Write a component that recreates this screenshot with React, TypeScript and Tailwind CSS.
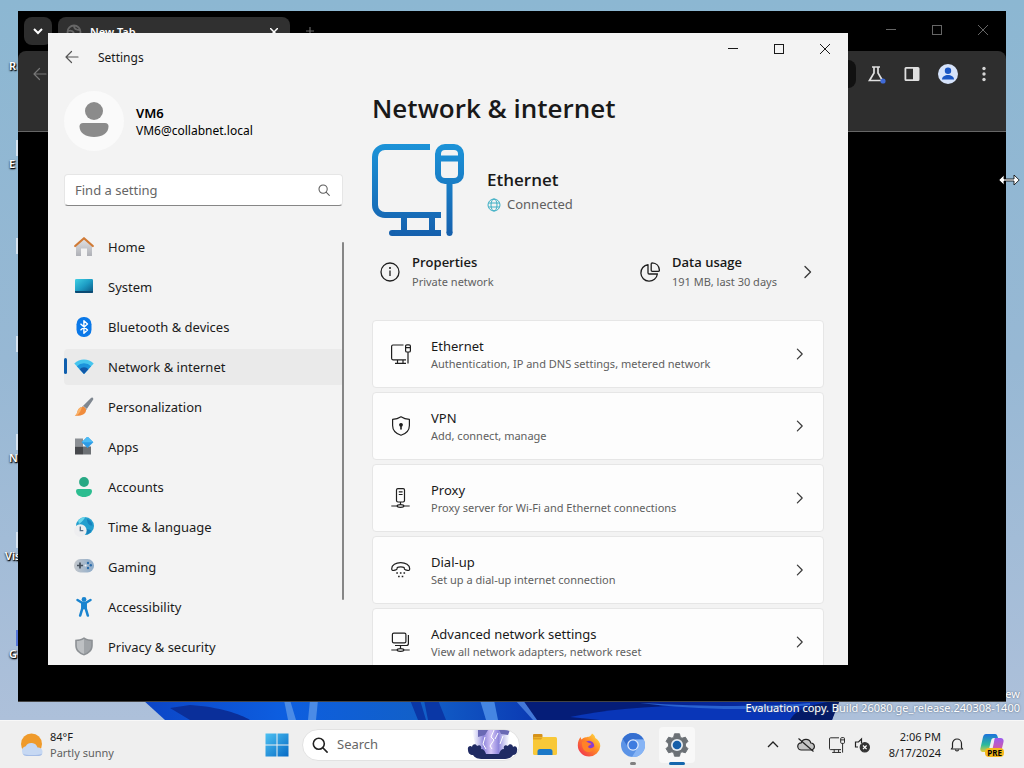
import React from 'react';
import clsx from 'clsx';

type IconProps = { className?: string };

const navItems = [
  { label: 'Home', icon: HomeIcon },
  { label: 'System', icon: SystemIcon },
  { label: 'Bluetooth & devices', icon: BluetoothIcon },
  { label: 'Network & internet', icon: WifiIcon, active: true },
  { label: 'Personalization', icon: BrushIcon },
  { label: 'Apps', icon: AppsIcon },
  { label: 'Accounts', icon: AccountsIcon },
  { label: 'Time & language', icon: TimeIcon },
  { label: 'Gaming', icon: GamingIcon },
  { label: 'Accessibility', icon: AccessibilityIcon },
  { label: 'Privacy & security', icon: ShieldIcon },
];

const cards = [
  { title: 'Ethernet', text: 'Authentication, IP and DNS settings, metered network', icon: EthernetIcon },
  { title: 'VPN', text: 'Add, connect, manage', icon: VpnIcon },
  { title: 'Proxy', text: 'Proxy server for Wi-Fi and Ethernet connections', icon: ProxyIcon },
  { title: 'Dial-up', text: 'Set up a dial-up internet connection', icon: DialUpIcon },
  { title: 'Advanced network settings', text: 'View all network adapters, network reset', icon: AdvancedIcon },
];

const shortcuts = ['R', 'E', '', '', 'N', 'Vis', 'G'];

/* ---------- Sidebar icons ---------- */

function HomeIcon() {
  return (
    <svg className="size-5" viewBox="0 0 20 20">
      <defs>
        <linearGradient id="homeWall" x1="0" y1="0" x2="0" y2="1">
          <stop offset="0" stopColor="#e4e4e6" />
          <stop offset="1" stopColor="#aeb0b6" />
        </linearGradient>
      </defs>
      <path d="M2 8.500 10 1l8 7.500v9.900a.6.600 0 0 1-.6.600H13v-7.500H7V19H2.600a.6.600 0 0 1-.6-.600z" fill="url(#homeWall)" />
      <path d="M1.200 9 10 1.200 18.800 9" fill="none" stroke="#d07a35" strokeWidth="2.200" strokeLinecap="round" strokeLinejoin="round" />
    </svg>
  );
}

function SystemIcon() {
  return (
    <svg className="size-5" viewBox="0 0 20 20">
      <defs>
        <linearGradient id="sysScreen" x1="0" y1="0" x2="1" y2="1">
          <stop offset="0" stopColor="#3fd0e4" />
          <stop offset="0.5" stopColor="#1d9cc4" />
          <stop offset="1" stopColor="#0a5480" />
        </linearGradient>
      </defs>
      <rect x="1" y="2" width="18" height="14" rx="1.200" fill="url(#sysScreen)" />
      <path d="M1 14h18v.8a1.200 1.200 0 0 1-1.200 1.200H2.200A1.200 1.200 0 0 1 1 14.800z" fill="#0b4a73" />
    </svg>
  );
}

function BluetoothIcon() {
  return (
    <svg className="size-5" viewBox="0 0 20 20">
      <rect x="2.500" y="0" width="15" height="20" rx="7.200" fill="#0a78e8" />
      <path d="m6.500 6.800 7 6.200-3.600 3.200V3.800L13.500 7l-7 6.200" fill="none" stroke="#fff" strokeWidth="1.400" strokeLinejoin="round" />
    </svg>
  );
}

function WifiIcon() {
  return (
    <svg className="size-5" viewBox="0 0 20 20">
      <path d="M.3 6.500a14 14 0 0 1 19.400 0L10 17z" fill="#46c5ee" />
      <path d="M2.900 9.300a10 10 0 0 1 14.200 0L10 17z" fill="#1c93dc" />
      <path d="M5.600 12.200a6.200 6.200 0 0 1 8.800 0L10 17z" fill="#1158a8" />
    </svg>
  );
}

function BrushIcon() {
  return (
    <svg className="size-5" viewBox="0 0 20 20">
      <path d="M18.900.9c.7.600.4 1.500 0 2.200L12.100 13 8.200 9.700l8.500-8.500c.7-.7 1.600-.9 2.200-.3z" fill="#7f8790" />
      <path d="m9.200 8.700 3.900 3-1 1.500-4.100-3.300z" fill="#b8bec5" />
      <path d="M8 9.900c2-.5 4.500 1.500 4 3.800-.7 3.600-4.700 5.500-11.200 5 1.800-1 2.300-2.500 2.700-4.400C4 11.800 5.500 10.300 8 9.900z" fill="#f08c3c" />
      <path d="M8 9.900c-2.500.4-4 1.900-4.500 4.400-.4 1.900-.9 3.400-2.700 4.400 4-.9 5.700-4 7.200-8.800z" fill="#f9b36a" />
    </svg>
  );
}

function AppsIcon() {
  return (
    <svg className="size-5" viewBox="0 0 20 20">
      <rect x="1" y="1.500" width="8" height="8" fill="#8b8f94" />
      <rect x="1" y="9.500" width="8" height="8" fill="#46484c" />
      <rect x="9" y="9.500" width="8" height="8" fill="#6d7175" />
      <path d="m13.500-.5 5.800 5.800-5.800 5.800-5.800-5.800z" fill="#2c9be6" />
      <path d="m13.500-.5 5.800 5.800H7.700z" fill="#4dbbf4" />
    </svg>
  );
}

function AccountsIcon() {
  return (
    <svg className="size-5" viewBox="0 0 20 20">
      <circle cx="10" cy="5" r="4.900" fill="#27a884" />
      <path d="M4 12h12a2 2 0 0 1 2 2c0 3.800-3.500 6-8 6s-8-2.200-8-6a2 2 0 0 1 2-2z" fill="#2cbd90" />
    </svg>
  );
}

function TimeIcon() {
  return (
    <svg className="size-5" viewBox="0 0 20 20">
      <circle cx="11" cy="9" r="9" fill="#249fce" />
      <path d="M4 3.500C6 1.200 9 0 11.500 0 10 2 9 4 5 7z" fill="#6bd6ea" />
      <path d="M13 2c3 1 5.200 3.500 5.500 6.500-2 .5-5.500-1-5.500-6.500zM13 12l4.500 1.200A9 9 0 0 1 12.500 18z" fill="#1781bd" />
      <circle cx="6.300" cy="13.500" r="6.300" fill="#eeeef0" />
      <path d="M6.300 9.500v4.200h3" fill="none" stroke="#57708a" strokeWidth="1.300" />
    </svg>
  );
}

function GamingIcon() {
  return (
    <svg className="size-5" viewBox="0 0 20 20">
      <defs>
        <linearGradient id="pad" x1="0" y1="0" x2="1" y2="0">
          <stop offset="0" stopColor="#c3c7cc" />
          <stop offset="1" stopColor="#8dabc9" />
        </linearGradient>
      </defs>
      <rect x="0" y="2" width="20" height="13.500" rx="6.500" fill="url(#pad)" />
      <path d="M6 5.500v6M3 8.500h6" stroke="#46505c" strokeWidth="1.700" />
      <circle cx="14" cy="6" r="1.200" fill="#2b6cab" />
      <circle cx="16.800" cy="8.300" r="1.200" fill="#2b6cab" />
      <circle cx="14" cy="11" r="1.200" fill="#2b6cab" />
      <circle cx="11.500" cy="8.500" r="1.100" fill="#e9f0f7" />
    </svg>
  );
}

function AccessibilityIcon() {
  return (
    <svg className="size-5" viewBox="0 0 20 20">
      <circle cx="10" cy="2.400" r="2.400" fill="#1a84cf" />
      <path d="M3.500 3 8 5.800h4L16.500 3" fill="none" stroke="#1a84cf" strokeWidth="2.500" strokeLinecap="round" strokeLinejoin="round" />
      <path d="M7.800 6h4.400v5.500H7.800z" fill="#1a84cf" stroke="#1a84cf" strokeWidth="1.500" strokeLinejoin="round" />
      <path d="M8.300 11.500 6.200 18.500M11.700 11.500l2.100 7" stroke="#1a84cf" strokeWidth="2.600" strokeLinecap="round" />
    </svg>
  );
}

function ShieldIcon() {
  return (
    <svg className="size-5" viewBox="0 0 20 20">
      <path d="M10 .3c2.800 1.800 5.700 2.400 8.800 2.400v5.800c0 5-3.500 8.200-8.800 10-5.300-1.800-8.800-5-8.800-10V2.700C4.300 2.700 7.200 2.100 10 .3z" fill="#8c9094" />
      <path d="M10 2c2.300 1.400 4.700 2 7.200 2.100v4.400c0 4-2.700 6.800-7.200 8.400z" fill="#a0a4a8" />
      <path d="M10 2C7.700 3.400 5.300 4 2.800 4.100v4.400c0 4 2.700 6.800 7.200 8.400z" fill="#bdc0c3" />
    </svg>
  );
}

/* ---------- Card icons ---------- */

function EthernetIcon({ className }: IconProps) {
  return (
    <svg className={className} viewBox="0 0 20 20" fill="none" stroke="currentColor" strokeWidth="1.200">
      <path d="M12.500 1H2A1.500 1.500 0 0 0 .6 2.500v11.800A1.500 1.500 0 0 0 2 15.800h13M6.500 15.800v3.400M12 15.800v3.400M4 19.300h11" />
      <rect x="14.600" y=".8" width="4.800" height="7.200" rx="1.300" />
      <path d="M14.600 3.600h4.800M17 8v11.500" />
    </svg>
  );
}

function VpnIcon({ className }: IconProps) {
  return (
    <svg className={className} viewBox="0 0 20 20" fill="none" stroke="currentColor" strokeWidth="1.200">
      <path d="M10 .8C12.500 2.500 15.300 3.300 18.400 3.400v6c0 4.800-3 8-8.400 9.900C4.600 17.400 1.600 14.200 1.600 9.400v-6C4.700 3.300 7.500 2.500 10 .8z" strokeLinejoin="round" />
      <circle cx="10" cy="8.800" r="1.300" fill="currentColor" />
      <path d="M10 9v4" strokeWidth="1.600" strokeLinecap="round" />
    </svg>
  );
}

function ProxyIcon({ className }: IconProps) {
  return (
    <svg className={className} viewBox="0 0 20 20" fill="none" stroke="currentColor" strokeWidth="1.200">
      <rect x="5.500" y=".6" width="8" height="13.400" rx="1.400" />
      <path d="M7.800 3.800h3.800M7.800 6.500h3.800M9.500 14v2.500M.3 18h6M12.700 18h6" />
      <ellipse cx="9.500" cy="18" rx="3.300" ry="1.300" />
    </svg>
  );
}

function DialUpIcon({ className }: IconProps) {
  return (
    <svg className={className} viewBox="0 0 20 20" fill="none" stroke="currentColor" strokeWidth="1.200">
      <path d="M.7 8.700C.7 5 4.800 2.700 9.700 2.700s9 2.300 9 6c0 1.500-1 2-2.200 1.700l-2-.5c-1.200-.3-1.400-1-1.400-2.300-.8-.6-2-.8-3.400-.8s-2.600.2-3.400.8c0 1.300-.2 2-1.400 2.300l-2 .5C1.700 10.700.7 10.200.7 8.700z" />
      <path d="M5.300 13h1.600M8.900 13h1.600M12.500 13h1.600M7.100 16.500h1.600M10.700 16.500h1.600" strokeWidth="1.500" />
    </svg>
  );
}

function AdvancedIcon({ className }: IconProps) {
  return (
    <svg className={className} viewBox="0 0 20 20" fill="none" stroke="currentColor" strokeWidth="1.200">
      <rect x="1.400" y="1.200" width="13.500" height="9.600" rx="1.400" />
      <path d="M17.400 3v8.500a2 2 0 0 1-2 2H4M9.500 13.500v3M.3 18h6M12.700 18h6" />
      <ellipse cx="9.500" cy="18" rx="3.300" ry="1.300" />
    </svg>
  );
}

function ChevronRight({ className }: IconProps) {
  return (
    <svg className={clsx('shrink-0 text-[#3a3a3a]', className)} viewBox="0 0 16 16" fill="none" stroke="currentColor" strokeWidth="1.400">
      <path d="m5 2.500 5.500 5.500L5 13.500" strokeLinecap="round" strokeLinejoin="round" />
    </svg>
  );
}

function BackArrow({ className }: IconProps) {
  return (
    <svg className={className} viewBox="0 0 16 16" fill="none" stroke="currentColor" strokeWidth="1.200">
      <path d="M14 8H2M7.500 2.500 2 8l5.500 5.500" strokeLinecap="round" strokeLinejoin="round" />
    </svg>
  );
}

function SearchGlyph({ className }: IconProps) {
  return (
    <svg className={className} viewBox="0 0 16 16" fill="none" stroke="currentColor" strokeLinecap="round">
      <circle cx="6.800" cy="6.800" r="5.500" />
      <path d="m10.800 10.800 4.300 4.300" />
    </svg>
  );
}

function WindowButtons({ className }: IconProps) {
  return (
    <div className={clsx('flex', className)}>
      <button aria-label="Minimize" className="flex h-8 w-[46px] items-center justify-center">
        <svg className="size-3" viewBox="0 0 12 12" stroke="currentColor">
          <path d="M1 5.500h10" />
        </svg>
      </button>
      <button aria-label="Maximize" className="flex h-8 w-[46px] items-center justify-center">
        <svg className="size-3" viewBox="0 0 12 12" fill="none" stroke="currentColor">
          <rect x="1.500" y="1.500" width="9" height="9" />
        </svg>
      </button>
      <button aria-label="Close" className="flex h-8 w-[46px] items-center justify-center">
        <svg className="size-3" viewBox="0 0 12 12" stroke="currentColor">
          <path d="m1 1 10 10M11 1 1 11" />
        </svg>
      </button>
    </div>
  );
}

/* ---------- Browser window ---------- */

function BrowserWindow() {
  return (
    <section aria-label="Browser" className="absolute top-[11px] right-[18px] bottom-[18px] left-[18px] flex flex-col border-b border-[#444] bg-black">
      <div className="flex h-10 shrink-0 items-start text-[#666]">
        <button aria-label="Search tabs" className="mt-[6px] ml-[6px] flex size-7 items-center justify-center rounded-lg bg-[#2d2d2d] text-white">
          <svg className="size-3" viewBox="0 0 12 12" fill="none" stroke="currentColor" strokeWidth="2">
            <path d="m2 4 4 4 4-4" />
          </svg>
        </button>
        <div className="mt-[6px] ml-[6px] flex h-[34px] w-[232px] items-center gap-2 rounded-t-lg bg-[#303030] px-2 pb-1 text-white">
          <svg className="size-4 text-[#666]" viewBox="0 0 16 16" fill="none" stroke="currentColor" strokeWidth="1.800">
            <circle cx="8" cy="8" r="6.500" />
            <path d="M2 7c3-1 5 0 6 2M8 2c0 3 3 4 6 4" />
          </svg>
          <span className="flex-1 text-[11px] font-semibold">New Tab</span>
          <button aria-label="Close tab" className="p-1">
            <svg className="size-2" viewBox="0 0 8 8" stroke="currentColor" strokeWidth="1.500">
              <path d="m0 0 8 8M8 0 0 8" />
            </svg>
          </button>
        </div>
        <button aria-label="New tab" className="mt-3 ml-3 p-1">
          <svg className="size-2" viewBox="0 0 8 8" stroke="currentColor" strokeWidth="1.200">
            <path d="M4 0v8M0 4h8" />
          </svg>
        </button>
        <WindowButtons className="ml-auto pt-[3px]" />
      </div>
      <div className="h-[81px] shrink-0 rounded-t-lg border-b border-[#666] bg-[#2e2e2e]">
        <div className="flex h-[46px] items-center gap-4 px-3">
          <button aria-label="Back" className="px-[2px] text-[#777]">
            <BackArrow className="size-4" />
          </button>
          <div className="mr-[-6px] h-7 flex-1 rounded-lg bg-[#111]"></div>
          <button aria-label="Labs" className="text-[#e0e0e0]">
            <svg className="size-5" viewBox="0 0 20 20" fill="none" stroke="currentColor" strokeWidth="1.700">
              <path d="M6 3h8M8 3v6l-4.500 7.500h13L12 9V3" />
              <circle cx="17" cy="17" r="2.600" fill="#3f6ad8" stroke="none" />
            </svg>
          </button>
          <button aria-label="Side panel" className="text-[#e0e0e0]">
            <svg className="size-5" viewBox="0 0 20 20" fill="currentColor">
              <path fillRule="evenodd" d="M4 3h12a1.500 1.500 0 0 1 1.500 1.500v11A1.500 1.500 0 0 1 16 17H4a1.500 1.500 0 0 1-1.500-1.500v-11A1.500 1.500 0 0 1 4 3zm.3 1.800v10.400H11V4.800z" />
            </svg>
          </button>
          <button aria-label="Profile">
            <svg className="size-5" viewBox="0 0 20 20">
              <circle cx="10" cy="10" r="10" fill="#d6e3fb" />
              <circle cx="10" cy="6.800" r="3.200" fill="#1a56c4" />
              <path d="M4 15.500c0-3 3-4.500 6-4.500s6 1.500 6 4.500z" fill="#1a56c4" />
            </svg>
          </button>
          <button aria-label="Menu" className="text-[#d5d5d5]">
            <svg className="size-5" viewBox="0 0 20 20" fill="currentColor">
              <circle cx="10" cy="4.500" r="1.700" />
              <circle cx="10" cy="10" r="1.700" />
              <circle cx="10" cy="15.500" r="1.700" />
            </svg>
          </button>
        </div>
      </div>
    </section>
  );
}

/* ---------- Settings window ---------- */

function Sidebar() {
  return (
    <aside className="relative w-[296px] shrink-0 overflow-hidden pl-4">
      <div className="mt-[10px] flex items-center gap-3">
        <svg className="size-[60px]" viewBox="0 0 60 60">
          <circle cx="30" cy="30" r="30" fill="#fafafa" />
          <circle cx="30" cy="20" r="9" fill="#8b8b8b" />
          <path d="M19 32h22a3.500 3.500 0 0 1 3.500 3.500C44.500 42 38 46 30 46s-14.500-4-14.500-10.500A3.500 3.500 0 0 1 19 32z" fill="#8b8b8b" />
        </svg>
        <div className="text-black">
          <p className="text-[13px] leading-5 font-semibold">VM6</p>
          <p className="text-[12px] leading-4">VM6@collabnet.local</p>
        </div>
      </div>
      <div className="mt-[23px] mr-px flex h-8 items-center rounded border border-[#e6e6e6] border-b-[#868686] bg-white pr-3 pl-[10px] text-[#5c5c5c]">
        <input
          type="text"
          aria-label="Find a setting"
          placeholder="Find a setting"
          className="min-w-0 flex-1 bg-transparent pt-px text-[13px] outline-none placeholder:text-[#666]"
        />
        <SearchGlyph className="size-3 stroke-[1.4]" />
      </div>
      <nav className="mt-[23px] flex flex-col gap-1">
        {navItems.map(({ label, icon: Icon, active }) => (
          <a
            key={label}
            href="#"
            className={clsx(
              'relative flex h-9 shrink-0 items-center gap-[14px] rounded pl-[10px] text-[13px] text-[#1b1b1b]',
              active && 'bg-[#eaeaea]'
            )}
          >
            {active && <span className="absolute top-[9px] left-0 h-4 w-[3px] rounded-full bg-[#0f5fae]"></span>}
            <Icon />
            <span className="pt-[2px]">{label}</span>
          </a>
        ))}
      </nav>
      <div className="absolute top-[161px] right-0 bottom-[65px] w-[2px] rounded-full bg-[#868686]"></div>
    </aside>
  );
}

function NetworkPage() {
  return (
    <main className="min-w-0 flex-1 overflow-hidden pr-6 pl-7">
      <h1 className="mt-[7px] font-['Open_Sans',sans-serif] text-[26px] leading-10 font-semibold text-[#191919]">Network &amp; internet</h1>
      <div className="mt-4 flex items-center gap-[23px]">
        <svg className="size-[92px]" viewBox="0 0 92 92" fill="none" stroke="url(#heroBlue)" strokeWidth="6">
          <defs>
            <linearGradient id="heroBlue" gradientUnits="userSpaceOnUse" x1="0" y1="0" x2="0" y2="92">
              <stop offset="0" stopColor="#1c93d8" />
              <stop offset="1" stopColor="#1560ad" />
            </linearGradient>
          </defs>
          <path d="M58 3H13A10 10 0 0 0 3 13v48a10 10 0 0 0 10 10h56M32 71v17M60 71v17" />
          <path d="M20 89h49" />
          <circle cx="20" cy="89" r="3" fill="#1560ad" stroke="none" />
          <rect x="66" y="3" width="23" height="34" rx="7" />
          <path d="M66 14.500h23M77.500 37v52" />
          <circle cx="77.500" cy="89" r="3" fill="#1560ad" stroke="none" />
        </svg>
        <div className="pt-1">
          <h2 className="font-['Open_Sans',sans-serif] text-[17px] leading-[25px] font-semibold text-[#191919]">Ethernet</h2>
          <p className="flex items-center gap-[6px] text-[13px] leading-[25px] text-[#606060]">
            <svg className="size-[14px]" viewBox="0 0 14 14" fill="none" stroke="#3aaec4">
              <circle cx="7" cy="7" r="6" />
              <ellipse cx="7" cy="7" rx="3" ry="6" />
              <path d="M1.500 5h11M1.500 9h11" />
            </svg>
            Connected
          </p>
        </div>
      </div>
      <div className="mt-4 grid grid-cols-[260px_1fr]">
        <button className="flex items-center gap-3 px-2 text-left">
          <svg className="size-5 shrink-0" viewBox="0 0 20 20" fill="none" stroke="#1f1f1f" strokeWidth="1.300">
            <circle cx="10" cy="10" r="9" />
            <path d="M10 8.500V14" />
            <circle cx="10" cy="6" r=".4" fill="#1f1f1f" />
          </svg>
          <span className="block leading-5">
            <span className="block font-['Open_Sans',sans-serif] text-[13px] font-semibold text-[#191919]">Properties</span>
            <span className="block text-[11px] text-[#606060]">Private network</span>
          </span>
        </button>
        <button className="flex items-center gap-3 px-2 text-left">
          <svg className="size-5 shrink-0" viewBox="0 0 20 20" fill="none" stroke="#1f1f1f" strokeWidth="1.300" strokeLinejoin="round">
            <path d="M8 2.600A8.300 8.300 0 1 0 17.400 12H9.200a1.200 1.200 0 0 1-1.200-1.200z" />
            <path d="M12.200.8c4 .2 7 3.200 7.200 7.400 0 .7-.4 1.100-1.100 1.100h-6c-.7 0-1.100-.4-1.100-1.100V1.900c0-.7.400-1.100 1-1.100z" />
          </svg>
          <span className="block flex-1 leading-5">
            <span className="block font-['Open_Sans',sans-serif] text-[13px] font-semibold text-[#191919]">Data usage</span>
            <span className="block text-[11px] text-[#606060]">191 MB, last 30 days</span>
          </span>
          <ChevronRight className="size-4" />
        </button>
      </div>
      <div className="mt-7 flex flex-col gap-1">
        {cards.map(({ title, text, icon: Icon }) => (
          <button
            key={title}
            className="flex h-[68px] shrink-0 items-center gap-5 rounded border border-[#e6e6e6] bg-[#fdfdfd] pr-4 pl-[18px] text-left"
          >
            <Icon className="size-5 shrink-0 text-[#1f1f1f]" />
            <span className="block flex-1">
              <span className="block text-[13px] leading-5 text-[#191919]">{title}</span>
              <span className="block text-[11px] leading-4 text-[#606060]">{text}</span>
            </span>
            <ChevronRight className="size-[14px]" />
          </button>
        ))}
      </div>
    </main>
  );
}

function SettingsWindow() {
  return (
    <section aria-label="Settings" className="absolute top-[33px] right-[176px] bottom-[55px] left-12 flex flex-col overflow-hidden bg-[#f3f3f3] text-[#191919]">
      <header className="flex h-12 shrink-0 items-center pl-4">
        <button aria-label="Back" className="text-[#555]">
          <BackArrow className="size-4" />
        </button>
        <span className="ml-[18px] pt-[2px] text-[12px]">Settings</span>
        <WindowButtons className="ml-auto self-start" />
      </header>
      <div className="flex min-h-0 flex-1">
        <Sidebar />
        <NetworkPage />
      </div>
    </section>
  );
}

/* ---------- Taskbar ---------- */

function Taskbar() {
  return (
    <footer className="flex h-12 shrink-0 items-center border-t border-[#f8f8f8] bg-[#efefef]">
      <button className="flex w-[256px] items-center gap-[6px] pl-5 text-left">
        <svg className="size-6" viewBox="0 0 24 24">
          <circle cx="11.500" cy="11" r="10.500" fill="#ef9a2b" />
          <path d="M6.500 23a5 5 0 0 1-.8-9.800A6.500 6.500 0 0 1 17.500 14.500a4.300 4.300 0 0 1 1.500 8.500z" fill="#c6d8f3" />
          <path d="M2.500 20.500c3 2 16 2 20 0A4 4 0 0 1 19 23H6.500a5 5 0 0 1-4-2.500z" fill="#a4bce6" />
        </svg>
        <span className="block text-[11px] leading-4">
          <span className="block text-[#191919]">84°F</span>
          <span className="block text-[#606060]">Partly sunny</span>
        </span>
      </button>
      <div className="flex items-center">
        <button aria-label="Start" className="flex w-[42px] justify-center">
          <svg className="size-6" viewBox="0 0 24 24" fill="url(#startBlue)">
            <defs>
              <linearGradient id="startBlue" gradientUnits="userSpaceOnUse" x1="0" y1="0" x2="24" y2="24">
                <stop offset="0" stopColor="#4fc3f3" />
                <stop offset="1" stopColor="#0468c4" />
              </linearGradient>
            </defs>
            <path d="M.5.500h11v11H.5zM12.500.500h11v11h-11zM.5 12.500h11v11H.5zM12.500 12.500h11v11h-11z" />
          </svg>
        </button>
        <div className="ml-1 flex h-8 w-[218px] items-center gap-2 overflow-hidden rounded-full border border-[#e2e2e2] bg-white pl-[9px]">
          <SearchGlyph className="size-4 shrink-0 stroke-[1.6] text-[#222]" />
          <input type="text" aria-label="Search" placeholder="Search" className="ml-[1px] w-0 flex-1 bg-transparent text-[13px] outline-none placeholder:text-[#666]" />
          <svg className="mr-px h-[30px] w-[52px] shrink-0" viewBox="0 0 52 30">
            <defs>
              <linearGradient id="storm" x1="0" y1="0" x2="1" y2="0">
                <stop offset="0" stopColor="#b9bdf0" stopOpacity="0" />
                <stop offset="0.3" stopColor="#8f86dc" />
                <stop offset="0.5" stopColor="#d5c6f7" />
                <stop offset="0.7" stopColor="#8f86dc" />
                <stop offset="1" stopColor="#b9bdf0" stopOpacity="0" />
              </linearGradient>
            </defs>
            <path d="M6 0h38l-4 27H12z" fill="url(#storm)" />
            <path d="M12 0h10l-3 5-7 2zM33 0h11l-2 5-7-1z" fill="#6a69b4" />
            <path d="m28 0-3 7 3 3-4 6 2 3M32 3l-3 6M19 7l-2 7 3 5M37 6l-3 8" fill="none" stroke="#fff" strokeLinejoin="round" />
            <path d="M2 20c-1-4 3-5 4-3 0-3 4-4 5-1 3-2 5 0 4 3 3 0 4 2 5 5h13c1-3 2-5 5-5-1-3 1-5 4-3 1-3 5-2 5 1 2-2 5 0 4 4 0 3-2 4-4 4-2 3-5 4-10 4H17c-5 0-8-1-10-4-3 0-5-2-5-5z" fill="#202b63" />
          </svg>
        </div>
        <div className="ml-[3px] flex items-center">
          <button aria-label="File Explorer" className="flex h-10 w-11 items-center justify-center">
            <svg className="size-6" viewBox="0 0 24 24">
              <path d="M1 1h7.500a1 1 0 0 1 1 1v4H0V2a1 1 0 0 1 1-1z" fill="#d6921b" />
              <rect x="0" y="4" width="24" height="18" rx="1.500" fill="#f8c838" />
              <path d="M0 4.500h9.500L8 6.500H0z" fill="#e0a021" />
              <path d="M4.500 22v-3.500A2.500 2.500 0 0 1 7 16h10a2.500 2.500 0 0 1 2.500 2.500V22z" fill="#1b78c8" />
            </svg>
          </button>
          <button aria-label="Firefox" className="flex h-10 w-11 items-center justify-center">
            <svg className="size-6" viewBox="0 0 24 24">
              <defs>
                <linearGradient id="fox" x1="1" y1="0" x2="0" y2="1">
                  <stop offset="0" stopColor="#fff04a" />
                  <stop offset="0.45" stopColor="#ff8a26" />
                  <stop offset="1" stopColor="#ee2457" />
                </linearGradient>
              </defs>
              <path d="M15 .5c2 1 3 3 3.300 4.500 3 2 5 4.500 5 8A11.200 11.200 0 0 1 12 23.500 11.200 11.200 0 0 1 .8 12.500C.8 8.500 2 6 3.800 4c0 1 .3 2 .8 2.500C5.500 5 7.500 4 9.500 4.200 11 4 14 3.500 15 .5z" fill="url(#fox)" />
              <circle cx="12" cy="13" r="5.200" fill="#8a3bd0" />
              <path d="M5 9c2-1 4-1 6 .5 1 1 3 .5 3.500 1.500-1 1.500-3 1-3.500 3 2 2.500 5.500 1 6.500-1.500.5 4-3 7-6.500 6.500-4-.5-6.500-4-6-10z" fill="#ff8228" />
            </svg>
          </button>
          <button aria-label="Chromium" className="relative flex h-10 w-11 items-center justify-center">
            <svg className="size-6" viewBox="0 0 24 24">
              <circle cx="12" cy="12" r="12" fill="#5b93e6" />
              <path d="M12 6.500h10.600A12 12 0 0 0 1.700 5.800l5.600 9z" fill="#356fd0" />
              <path d="M22.700 6.500A12 12 0 0 1 11 24l5.500-9c2-3 0-7-2.500-8.500z" fill="#86b4f5" />
              <circle cx="12" cy="12" r="5.800" fill="#dfeafd" />
              <circle cx="12" cy="12" r="4.500" fill="#3d7be0" />
            </svg>
            <span className="absolute bottom-0 h-[3px] w-[6px] rounded-full bg-[#808080]"></span>
          </button>
          <button aria-label="Settings" className="relative flex h-10 w-11 items-center justify-center">
            <span className="flex h-9 w-9 items-center justify-center rounded bg-[#f8f8f8]">
              <svg className="size-6" viewBox="0 0 24 24">
                <path d="M9.500.8h5l.8 3.400 1.700 1 3.400-1 2.500 4.200-2.500 2.500v2.200l2.500 2.500-2.500 4.200-3.400-1-1.700 1-.8 3.400h-5l-.8-3.400-1.700-1-3.400 1-2.500-4.200 2.500-2.500v-2.200L1.100 8.400l2.500-4.200 3.400 1 1.700-1z" fill="#6b7075" stroke="#6b7075" strokeLinejoin="round" />
                <circle cx="12" cy="12" r="6" fill="#e7edf2" />
                <circle cx="12" cy="12" r="4.300" fill="#165fa9" />
              </svg>
            </span>
            <span className="absolute bottom-0 h-[3px] w-4 rounded-full bg-[#1467ad]"></span>
          </button>
        </div>
      </div>
      <div className="ml-auto flex items-center pr-5 text-[#222]">
        <button aria-label="Show hidden icons" className="mr-[14px] p-1">
          <svg className="size-3" viewBox="0 0 12 12" fill="none" stroke="currentColor" strokeWidth="1.300">
            <path d="m1 8 5-5 5 5" />
          </svg>
        </button>
        <button aria-label="Cloud storage" className="mr-[14px]">
          <svg className="h-4 w-[18px]" viewBox="0 0 18 16" fill="#c4c4c4" stroke="currentColor" strokeWidth="1.200">
            <path d="M4.500 13a3.600 3.600 0 0 1-.3-7.200A5 5 0 0 1 13.800 6 3.500 3.500 0 0 1 14 13z" />
            <path d="m1.500 1.500 15 13" />
          </svg>
        </button>
        <button aria-label="Network" className="mr-[9px]">
          <EthernetIcon className="h-[18px] w-4" />
        </button>
        <button aria-label="Volume muted" className="mr-[19px]">
          <svg className="size-4" viewBox="0 0 16 16" fill="none" stroke="currentColor" strokeWidth="1.200">
            <path d="M7.500 6V2L4.500 5H1.500v5H4" />
            <circle cx="10.800" cy="10.300" r="4.600" fill="#333" stroke="#333" />
            <path d="m9 8.500 3.600 3.600M12.600 8.500 9 12.100" stroke="#fff" />
          </svg>
        </button>
        <button className="mr-[9px] text-right text-[11px] leading-4 text-[#191919]">
          <span className="block">2:06 PM</span>
          <span className="block">8/17/2024</span>
        </button>
        <button aria-label="Notifications" className="mr-4">
          <svg className="size-[14px]" viewBox="0 0 14 14" fill="none" stroke="currentColor" strokeWidth="1.200">
            <path d="M2.500 9.500V5.500a4.500 4.500 0 0 1 9 0v4l1.200 1.500H1.300z" strokeLinejoin="round" />
            <path d="M5.500 11.500a1.500 1.500 0 0 0 3 0" />
          </svg>
        </button>
        <button aria-label="Copilot" className="relative">
          <svg className="size-6" viewBox="0 0 24 24">
            <defs>
              <linearGradient id="copilotA" x1="0" y1="0" x2="0" y2="1">
                <stop offset="0" stopColor="#1b72dc" />
                <stop offset="0.6" stopColor="#2dba9c" />
                <stop offset="1" stopColor="#e0cf3a" />
              </linearGradient>
              <linearGradient id="copilotB" x1="0" y1="0" x2="0" y2="1">
                <stop offset="0" stopColor="#9a5cf0" />
                <stop offset="1" stopColor="#f2587a" />
              </linearGradient>
            </defs>
            <path d="M6 1h9c2 0 2.500 2 3 4h-4c-2 0-2.500 1-3 3l-2 8c-.5 2-1.500 3-3.500 3H3c-2.500 0-3-2.500-2.500-4L3 4c.5-2 1.500-3 3-3z" fill="url(#copilotA)" />
            <path d="M15 5h5.500c2.500 0 3.500 2 3 4l-2.500 10c-.5 2-1.500 3-3.500 3H10c-1.500 0-2.500-1-3-3h3c1.500 0 2-1 2.500-3L14 9c.3-1.500.3-3 1-4z" fill="url(#copilotB)" />
          </svg>
          <span className="absolute right-0 bottom-0 rounded bg-[#f6b91c] px-[2px] text-[8px] leading-[9px] font-bold text-black">PRE</span>
        </button>
      </div>
    </footer>
  );
}

function Wallpaper() {
  return (
    <svg className="absolute inset-x-0 bottom-0 h-5 w-full" viewBox="0 0 1024 20" preserveAspectRatio="none">
      <defs>
        <linearGradient id="bloom" x1="0" y1="0" x2="1" y2="0">
          <stop offset="0" stopColor="#0c45c6" />
          <stop offset="0.2" stopColor="#0d5ee0" />
          <stop offset="0.4" stopColor="#1260c8" />
          <stop offset="0.55" stopColor="#0b3db5" />
          <stop offset="0.7" stopColor="#06218a" />
          <stop offset="1" stopColor="#0630b0" />
        </linearGradient>
      </defs>
      <path d="M143 0h695l-6 20H165z" fill="url(#bloom)" />
      <path d="M190 5c30 2 50 9 60 15h-60l-20-12z" fill="#0a2f9a" />
      <path d="M284 0h6l6 20h-8zM310 0h8l-2 20h-8z" fill="#4b8be6" />
      <path d="M410 0h10l6 20h-8zM424 0h14l8 20h-18z" fill="#0a37a6" />
      <path d="M480 0h14l4 20h-12z" fill="#4586e2" />
      <path d="M515 0h8l16 20h-6z" fill="#4378d8" />
      <path d="M523 0h120l60 20H537z" fill="#051d78" />
      <path d="M570 17c60-12 140-16 240-4v7H600z" fill="#0936b8" />
      <path d="M640 3c60 3 110 5 170 0v2c-60 7-120 4-170-2z" fill="#2a62d0" />
      <path d="M790 20c5-10 20-16 50-20l-8 20z" fill="#041a66" />
    </svg>
  );
}

export default function App() {
  return (
    <div className="flex h-screen min-h-[600px] flex-col overflow-hidden bg-[#efefef] font-['Noto_Sans','Open_Sans',sans-serif]">
      <div className="relative flex-1 overflow-hidden bg-gradient-to-b from-[#8cb7d2] via-[#97b8d4] to-[#adc0da]">
        <Wallpaper />
        <ul className="flex w-[76px] flex-col pt-[10px] text-[11px] text-white">
          {shortcuts.map((name, i) => (
            <li key={i} className="flex h-[98px] flex-col pt-8">
              <span className={clsx('ml-4 h-4 w-4', i === 6 ? 'bg-[#5576d8]' : i > 0 && 'bg-[#d6e2ee]')}></span>
              <span className={clsx('font-semibold [text-shadow:0_1px_2px_#000,1px_1px_1px_#000]', name === 'Vis' ? 'pl-[5px]' : 'pl-[9px]')}>
                {name}
              </span>
            </li>
          ))}
        </ul>
        <div className="absolute right-1 bottom-[5px] text-right text-[11px] leading-[14px] text-white [text-shadow:0_0_2px_#46566e]">
          <p>ew</p>
          <p>Evaluation copy. Build 26080.ge_release.240308-1400</p>
        </div>
        <BrowserWindow />
        <SettingsWindow />
        {/* Resize cursor */}
        <svg className="absolute top-[174px] right-1 h-3 w-[22px]" viewBox="0 0 22 12">
          <path d="M.8 6 6 1v4h10V1l5.200 5L16 11V7H6v4z" fill="#fff" stroke="#000" strokeWidth=".8" strokeLinejoin="round" />
        </svg>
      </div>
      <Taskbar />
    </div>
  );
}
